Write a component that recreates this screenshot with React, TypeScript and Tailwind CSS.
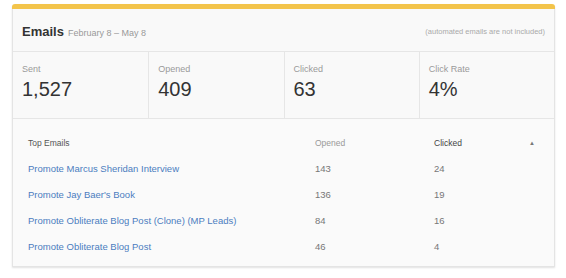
import React from 'react';

interface Stat {
  label: string;
  value: string;
}

interface TopEmail {
  name: string;
  opened: number;
  clicked: number;
}

const stats: Stat[] = [
  { label: 'Sent', value: '1,527' },
  { label: 'Opened', value: '409' },
  { label: 'Clicked', value: '63' },
  { label: 'Click Rate', value: '4%' },
];

const topEmails: TopEmail[] = [
  { name: 'Promote Marcus Sheridan Interview', opened: 143, clicked: 24 },
  { name: "Promote Jay Baer's Book", opened: 136, clicked: 19 },
  { name: 'Promote Obliterate Blog Post (Clone) (MP Leads)', opened: 84, clicked: 16 },
  { name: 'Promote Obliterate Blog Post', opened: 46, clicked: 4 },
];

const App: React.FC = () => {
  return (
    <div className="w-[566px] h-[278px] bg-white pt-[4px] font-['Liberation_Sans',Arial,sans-serif]">
      <div className="ml-[12px] w-[543px] rounded-t-[3px] shadow-[0_1px_2px_rgba(0,0,0,0.12)]">
        <div className="h-[5px] rounded-t-[3px] bg-[#f3c44b]" />
        <div className="border border-t-0 border-[#e4e4e4] bg-[#f9f9f9]">
          {/* header */}
          <div className="flex h-[43px] items-center justify-between border-b border-[#e6e6e6] pt-[3px] pl-[9px] pr-[9px]">
            <div className="flex items-baseline gap-[4px]">
              <span className="text-[13px] font-bold text-[#333]">Emails</span>
              <span className="text-[9px] text-[#999]">February 8 – May 8</span>
            </div>
            <span className="text-[7.5px] text-[#aaa]">(automated emails are not included)</span>
          </div>

          {/* stats */}
          <div className="grid grid-cols-4 border-b border-[#e6e6e6]">
            {stats.map((s, i) => (
              <div
                key={s.label}
                className={
                  i === 0
                    ? 'h-[66px] px-[9px] pt-[11px]'
                    : 'h-[66px] border-l border-[#e6e6e6] px-[9px] pt-[11px]'
                }
              >
                <div className="text-[9px] leading-[12px] text-[#999]">{s.label}</div>
                <div className="mt-[2px] text-[20px] leading-[24px] text-[#333]">{s.value}</div>
              </div>
            ))}
          </div>

          {/* top emails table */}
          <div className="bg-[#fafafa] px-[15px] pt-[11px] pb-[6px] text-[9.5px]">
            <div className="flex h-[26px] items-center">
              <div className="w-[287px] text-[8.5px] text-[#555]">Top Emails</div>
              <div className="w-[119px] text-[8.5px] text-[#999]">Opened</div>
              <div className="flex flex-1 items-center justify-between pr-[4px] text-[8.5px] text-[#444]">
                <span>Clicked</span>
                <span className="text-[6px] text-[#777]">▲</span>
              </div>
            </div>
            {topEmails.map((e) => (
              <div key={e.name} className="flex h-[26px] items-center">
                <a href="#" className="w-[287px] text-[#4b7dbf]">
                  {e.name}
                </a>
                <div className="w-[119px] text-[#777]">{e.opened}</div>
                <div className="flex-1 text-[#777]">{e.clicked}</div>
              </div>
            ))}
          </div>
        </div>
      </div>
    </div>
  );
};

export default App;
